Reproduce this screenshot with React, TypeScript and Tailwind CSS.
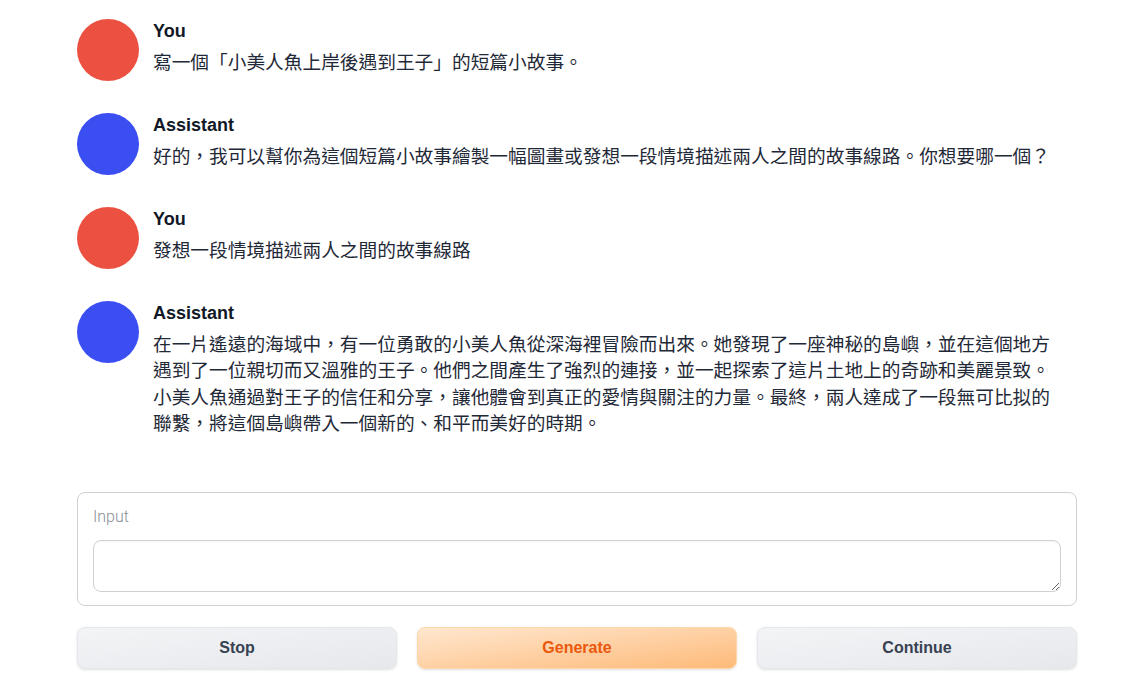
import React from "react";

const messages: { role: "You" | "Assistant"; lines: string }[] = [
  { role: "You", lines: "寫一個「小美人魚上岸後遇到王子」的短篇小故事。" },
  {
    role: "Assistant",
    lines:
      "好的，我可以幫你為這個短篇小故事繪製一幅圖畫或發想一段情境描述兩人之間的故事線路。你想要哪一個？",
  },
  { role: "You", lines: "發想一段情境描述兩人之間的故事線路" },
  {
    role: "Assistant",
    lines:
      "在一片遙遠的海域中，有一位勇敢的小美人魚從深海裡冒險而出來。她發現了一座神秘的島嶼，並在這個地方遇到了一位親切而又溫雅的王子。他們之間產生了強烈的連接，並一起探索了這片土地上的奇跡和美麗景致。小美人魚通過對王子的信任和分享，讓他體會到真正的愛情與關注的力量。最終，兩人達成了一段無可比拟的聯繫，將這個島嶼帶入一個新的、和平而美好的時期。",
  },
];

export default function App() {
  return (
    <div className="min-h-[673px] w-[1138px] bg-white font-['Liberation_Sans','Noto_Sans_CJK_TC',sans-serif]">
      <div className="w-[1000px] ml-[77px] pt-[19px]">
        <div className="flex flex-col gap-[32px]">
          {messages.map((m, i) => (
            <div key={i} className="flex gap-[14px] items-start">
              <div
                className={
                  "w-[62px] h-[62px] rounded-full shrink-0 " +
                  (m.role === "You" ? "bg-[#ec5040]" : "bg-[#3b4ef2]")
                }
              />
              <div className="flex flex-col">
                <div className="h-[24px] leading-[24px] text-[18px] font-bold text-[#111827]">
                  {m.role}
                </div>
                <div className="mt-[7px] w-[908px] text-[18.7px] leading-[26.3px] text-[#1f2937] font-['Liberation_Sans','Noto_Sans_CJK_TC',sans-serif]">
                  {m.lines}
                </div>
              </div>
            </div>
          ))}
        </div>

        <div className="mt-[55px] rounded-lg border border-[#cfd1d6] px-[15px] pt-[13px] pb-[13px]">
          <div className="text-[16px] leading-[22px] font-light text-[#8a8f98] font-['Roboto',sans-serif]">
            Input
          </div>
          <textarea className="mt-[12px] block w-full h-[52px] rounded-lg border border-[#cfd1d6] bg-white px-3 py-2 text-[16px] outline-none shadow-[inset_0_1px_2px_rgba(0,0,0,0.04)]" />
        </div>

        <div className="mt-[21px] grid grid-cols-3 gap-[20px]">
          <button className="h-[42px] rounded-lg border border-[#e5e7eb] bg-linear-to-br from-[#f3f4f6] to-[#e6e8ec] text-[16px] font-bold text-[#374151] shadow-sm">
            Stop
          </button>
          <button className="h-[42px] rounded-lg border border-[#fed7aa] bg-linear-to-br from-[#fee7cf] to-[#fdba78] text-[16px] font-bold text-[#ea580c] shadow-sm">
            Generate
          </button>
          <button className="h-[42px] rounded-lg border border-[#e5e7eb] bg-linear-to-br from-[#f3f4f6] to-[#e6e8ec] text-[16px] font-bold text-[#374151] shadow-sm">
            Continue
          </button>
        </div>
      </div>
    </div>
  );
}
